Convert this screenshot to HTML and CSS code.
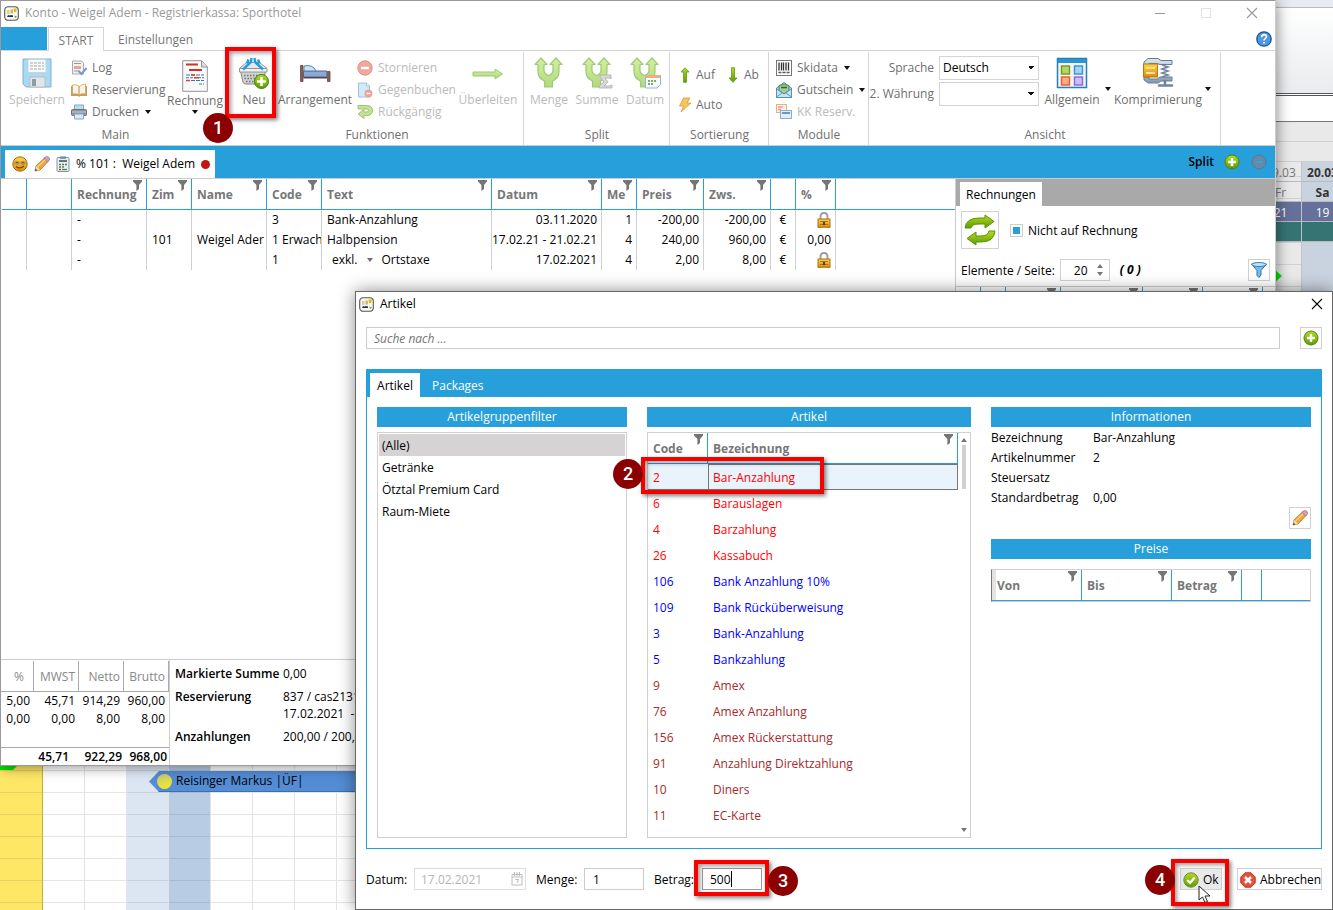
FILE: index.html
```html
<!DOCTYPE html>
<html lang="de">
<head>
<meta charset="utf-8">
<title>Konto - Weigel Adem - Registrierkassa: Sporthotel</title>
<link rel="stylesheet" href="styles.css">
</head>
<body>
<svg class="sprite" width="0" height="0" aria-hidden="true">
  <defs>
    <linearGradient id="gGreen" x1="0" y1="0" x2="0" y2="1"><stop offset="0" stop-color="#b4dc1e"/><stop offset="1" stop-color="#5e9c08"/></linearGradient>
    <linearGradient id="gPale" x1="0" y1="0" x2="0" y2="1"><stop offset="0" stop-color="#d6eda0"/><stop offset="1" stop-color="#b2d880"/></linearGradient>
    <linearGradient id="gGold" x1="0" y1="0" x2="0" y2="1"><stop offset="0" stop-color="#ffd54a"/><stop offset="1" stop-color="#dc8a10"/></linearGradient>
    <linearGradient id="gSteel" x1="0" y1="0" x2="0" y2="1"><stop offset="0" stop-color="#dde6f0"/><stop offset="1" stop-color="#8598ae"/></linearGradient>
  </defs>
  <symbol id="app" viewBox="0 0 15 15"><rect x=".7" y=".7" width="13.6" height="13.6" rx="3.5" fill="#faf8ee" stroke="#555" stroke-width="1.1"/><path d="M3 4h2.500v4H3z" fill="#e8cf80"/><path d="M6.500 3.500H9v4H6.500z" fill="#cdb978"/><path d="M9.500 2.500h3.500l-1 3.500h-2z" fill="#f0b400"/><path d="M3 11l1-2 1.500.5L7 9l2 .5V11z" fill="#173a63"/><path d="M10 9.500l3 1-1.500 1.500z" fill="#6b9b30"/></symbol>
  <symbol id="funnel" viewBox="0 0 9 11"><path d="M0 0h9v1.500L6 5v4l-2.600 2V5L0 1.500z" fill="#757575"/></symbol>
  <symbol id="down" viewBox="0 0 6 4"><path d="M0 0h6L3 4z" fill="#111"/></symbol>
  <symbol id="save" viewBox="0 0 30 32"><path d="M1 2h28v28H4l-3-3z" fill="#a9d9f3" stroke="#78b4d8"/><rect x="6" y="2.500" width="18" height="13" fill="#fafafa" stroke="#c3d6e2"/><path d="M8 6h14M8 9h14M8 12h14" stroke="#a8a8a8" stroke-dasharray="3 1"/><rect x="8" y="20" width="15" height="10" fill="#e5e5e5" stroke="#b4c0c8"/><rect x="10" y="22" width="4" height="7" fill="#8c9ca8"/></symbol>
  <symbol id="log" viewBox="0 0 16 16"><path d="M1.500 1h9l2 2v11h-11z" fill="#f2f2f2" stroke="#aaa"/><path d="M3 3.500h7M3 11h5" stroke="#999"/><path d="M3 6h7v3H3z" fill="#e2a98c"/><path d="M7.500 11l3 3 5-6" fill="none" stroke="#6f9cd0" stroke-width="2"/></symbol>
  <symbol id="book" viewBox="0 0 16 16"><path d="M0 4h16v10H9l-1 1-1-1H0z" fill="#cf9a55"/><path d="M1.500 3q4-1 6.500 1v9q-2-2-6.500-1zM14.500 2q-4 0-6.500 3v8q2-2 6.500-1z" fill="#fbf3df" stroke="#b99c6c" stroke-width=".7"/></symbol>
  <symbol id="print" viewBox="0 0 16 16"><path d="M3.500 1h9v5h-9z" fill="#b8dcf5" stroke="#86a6bf"/><rect x=".5" y="5.500" width="15" height="6" rx="1" fill="#8d949c" stroke="#6f757b"/><path d="M1 8h14" stroke="#c9ced3"/><path d="M3.500 10h9v5h-9z" fill="#d6e9f8" stroke="#86a6bf"/></symbol>
  <symbol id="bill" viewBox="0 0 26 32"><path d="M.7.700h19l5.600 6v24.600H.7z" fill="#fafafa" stroke="#8f9499"/><path d="M19.500 1v6h6" fill="#ddd" stroke="#8f9499"/><path d="M4 4.500h12M7 10h13" stroke="#d4311f" stroke-width="2"/><path d="M4 15h18M4 20.500h18" stroke="#3b73ba" stroke-width="1.200" stroke-dasharray="4 1"/><path d="M4 17.800h18M17 24h5" stroke="#3b73ba" stroke-width="1.100" stroke-dasharray="3 1"/><path d="M9 15h4M12 17.800h5M4 20.500h4" stroke="#e0422e" stroke-width="1.500"/></symbol>
  <symbol id="plus" viewBox="0 0 16 16"><circle cx="8" cy="8" r="7" fill="url(#gGreen)" stroke="#4c8410"/><path d="M8 4v8M4 8h8" stroke="#fff" stroke-width="2.400"/></symbol>
  <symbol id="basket" viewBox="0 0 32 32"><path d="M1.500 11.500l7-6h13l7.500 6z" fill="#e8e8e8" stroke="#999"/><path d="M2.500 14h25l-2.500 11q-.5 2-2.500 2h-15q-2 0-2.500-2z" fill="#d2d2d2" stroke="#868686"/><path d="M1.500 11.500h27.500v3.500H1.500z" fill="#f2f2f2" stroke="#8c8c8c" stroke-width=".9"/><path d="M6 18.500h19M6.500 21.500h18M8 24.500h15" stroke="#747474" stroke-width="1.300" stroke-dasharray="1.500 1.500"/><path d="M13.500 1L13 5 5 12.500M16.500 1l.5 4 8 7.500M10.500 2.500L9 6.500M20 2.500l1.500 4" stroke="#259be0" stroke-width="2.400" fill="none"/><circle cx="23.500" cy="24.500" r="7" fill="url(#gGreen)" stroke="#3f7c0b"/><path d="M23.500 20v9M19 24.500h9" stroke="#fff" stroke-width="2.600"/></symbol>
  <symbol id="bed" viewBox="0 0 32 32"><path d="M1.500 8.500h2.500v16H1.500zM28.500 14.500H31v10h-2.500z" fill="#8a604c" stroke="#68483b" stroke-width=".8"/><path d="M4.500 14h23.500v6H4.500z" fill="#8aa9d9" stroke="#4e6790"/><path d="M4.500 20h23.500v1.500H4.500z" fill="#5a4745"/><path d="M5 9q9-2 12 5H5z" fill="#c5e4f8" stroke="#5b82ad"/></symbol>
  <symbol id="stop" viewBox="0 0 16 16"><circle cx="8" cy="8" r="7.200" fill="#f2a79e" stroke="#e78a80"/><path d="M4 8h8" stroke="#fff" stroke-width="2.500"/></symbol>
  <symbol id="counter" viewBox="0 0 16 16"><path d="M1.500 1h8l3 3v11h-11z" fill="#d3e9f7" stroke="#9fc3dc"/><path d="M9.500 1v3h3" fill="#fff" stroke="#9fc3dc"/><circle cx="11.500" cy="11.500" r="3.900" fill="#f0a096"/><path d="M9.500 11.500h4" stroke="#fff" stroke-width="1.500"/></symbol>
  <symbol id="undo" viewBox="0 0 16 16"><path d="M1 1.500h8.500q6 0 6 5t-6 5H7v3L1 10l6-4.500v2.500h2.500q2 0 2-1.500t-2-1.500H1z" fill="#c5e09b" stroke="#9cc76a"/></symbol>
  <symbol id="transfer" viewBox="0 0 32 32"><path d="M1 15h22v-3l7.500 5-7.500 5v-3H1z" fill="url(#gPale)" stroke="#9cc973"/></symbol>
  <symbol id="split" viewBox="0 0 32 32"><path d="M8 1l6 6.500h-3V13q0 4 4.500 5.500Q20 17 20 13V7.500h-3L23 1l6 6.500h-3V15q0 6-6.500 9v6h-8v-6Q5 21 5 15V7.500H2z" fill="url(#gPale)" stroke="#9bcb73" stroke-width="1.200" stroke-linejoin="round"/></symbol>
  <symbol id="splitsum" viewBox="0 0 32 32"><use href="#split"/><path d="M19 18h11v4l-1-1h-5l3 4-4 4h6l2-1v3H18v-2l5-4-4-5z" fill="#d9d9d9" stroke="#aaa" stroke-width=".8"/></symbol>
  <symbol id="splitdate" viewBox="0 0 32 32"><use href="#split"/><path d="M16.500 18.500h15v9l-3.500 3.500H16.500z" fill="#f7fbff" stroke="#8eb7da"/><path d="M16.500 19.500h15" stroke="#efad83" stroke-width="3"/><path d="M19 24h9M19 27h6" stroke="#78b05b" stroke-width="2" stroke-dasharray="2 1"/></symbol>
  <symbol id="up" viewBox="0 0 12 16"><path d="M6 .7l4 4.300H7.500v10.300h-3V5H2z" fill="url(#gGreen)" stroke="#61981b" stroke-width=".8"/></symbol>
  <symbol id="dn" viewBox="0 0 12 16"><path d="M6 15.300L10 11H7.500V.7h-3V11H2z" fill="url(#gGreen)" stroke="#61981b" stroke-width=".8"/></symbol>
  <symbol id="flash" viewBox="0 0 12 16"><path d="M4.500 1H11L8 6h4L2 15l2.500-6H.5z" fill="#fac45d" stroke="#dc973e" stroke-width=".8"/></symbol>
  <symbol id="barcode" viewBox="0 0 16 16"><rect x=".5" y=".5" width="15" height="15" fill="#fff" stroke="#777"/><path d="M3 2.500v8M5.500 2.500v8M7.500 2.500v8M10 2.500v8M12.500 2.500v8" stroke="#333" stroke-width="1.300"/><path d="M2.500 12.500h11" stroke="#555" stroke-width="1.300" stroke-dasharray="3 1"/></symbol>
  <symbol id="voucher" viewBox="0 0 16 16"><path d="M.5 6L8 .5 15.500 6v9.500H.5z" fill="#a6d3ee" stroke="#4688b7"/><path d="M3 3.500q5-2 10 0v5L8 12 3 8.500z" fill="#a5c990" stroke="#4b7b49" stroke-width=".8"/><path d="M.5 7L8 12l7.500-5v8.500H.5z" fill="#c3e3f6" stroke="#4688b7" stroke-width=".8"/><path d="M.5 15L6 11M15.500 15L10 11" fill="none" stroke="#4688b7" stroke-width=".8"/><path d="M5 5.500h6" stroke="#38663a" stroke-width="1.500"/></symbol>
  <symbol id="cards" viewBox="0 0 16 16"><rect x=".5" y=".5" width="10" height="8" fill="#fff0df" stroke="#e3b184"/><path d="M2 3h5M2 5.500h3" stroke="#e99999" stroke-width="1.400"/><rect x="4.500" y="6.500" width="11" height="8" fill="#e0eefb" stroke="#87add0"/><path d="M6 9h8" stroke="#6e94c2" stroke-width="2"/></symbol>
  <symbol id="tiles" viewBox="0 0 32 32"><path d="M1.500 1.500h29v29h-29z" fill="#f4f4f4" stroke="#2380b8" stroke-width="1.500"/><path d="M2 2h28v4H2z" fill="#2c94d3"/><rect x="5.500" y="9" width="8" height="8" fill="#b9d46f" stroke="#789b17" stroke-width="1.400"/><rect x="18.500" y="9" width="8" height="8" fill="#9ed5fc" stroke="#3e8fcd" stroke-width="1.400"/><rect x="5.500" y="20" width="8" height="8" fill="#ffab85" stroke="#e0602e" stroke-width="1.400"/><rect x="18.500" y="20" width="8" height="8" fill="#cdbcfa" stroke="#8a67d5" stroke-width="1.400"/></symbol>
  <symbol id="clamp" viewBox="0 0 32 32"><path d="M2 5l4-3.500h10l3 2h11v4H18l-3-1H7v2H2zM2 20h5v2h8l3-2h12v4H19l-3 2H6l-4-3z" fill="url(#gSteel)" stroke="#677d95"/><path d="M20 8l6 2-6 2 6 2-6 2 6 2-6 2" fill="none" stroke="#71869d" stroke-width="1.600"/><path d="M23 24v4M17 28.500h13" stroke="#71869d" stroke-width="2.600" stroke-linecap="round"/><rect x="1.500" y="7" width="14" height="13" fill="url(#gGold)" stroke="#b07a16"/><path d="M4 11h9M4 16h9" stroke="#fbe18a" stroke-width="2"/></symbol>
  <symbol id="help" viewBox="0 0 16 16"><circle cx="8" cy="8" r="7.200" fill="#4d98df" stroke="#1a5298" stroke-width="1.300"/><path d="M5.700 6.200q0-2.500 2.400-2.500t2.300 2.100q0 1-1.200 1.800T8 9.400M8 10.900v1.700" fill="none" stroke="#fff" stroke-width="1.700"/></symbol>
  <symbol id="smile" viewBox="0 0 16 16"><circle cx="8" cy="8" r="7.200" fill="url(#gGold)" stroke="#a8690b"/><path d="M2.800 6h4v1.500q-2 1.500-4 0zM9 6h4v1.500q-2 1.500-4 0z" fill="#fff8dc" stroke="#7b5510" stroke-width=".7"/><path d="M5 6v1.500M11 6v1.500" stroke="#321" stroke-width="1.200"/><path d="M4 10.500q4 3 8-.5" fill="none" stroke="#7b4300" stroke-width="1.100"/></symbol>
  <symbol id="pencil" viewBox="0 0 16 16"><path d="M1 15l1-5L11 1.500 14.500 5 6 14z" fill="#f5a637" stroke="#a8681f" stroke-width=".8"/><path d="M3.500 11L12 3" stroke="#ffd282" stroke-width="1.300"/><path d="M10 2.500L12 .7q1.500-.7 3 .8t.4 2.700L13.500 6z" fill="#d69cc0" stroke="#98708c" stroke-width=".7"/><path d="M2 10l4 4-5 1z" fill="#f5dfb5"/><path d="M1 15l.5-2.500L3.500 14.500z" fill="#444"/></symbol>
  <symbol id="calc" viewBox="0 0 14 16"><rect x="1" y="1.500" width="12" height="14" rx="1" fill="#e8eff4" stroke="#7f96a5"/><rect x="4" y=".4" width="6" height="2.500" fill="#7891a2"/><path d="M3 5h8" stroke="#455" stroke-width="1.600"/><path d="M3 8.500h8M3 11h5" stroke="#578158" stroke-width="1.300" stroke-dasharray="2 1"/><path d="M3 13.500h2" stroke="#c83422" stroke-width="1.300"/><path d="M6 13.500h5" stroke="#38914a" stroke-width="1.300"/></symbol>
  <symbol id="lock" viewBox="0 0 14 16"><path d="M3.500 8V4.500Q3.500 1 7 1t3.500 3.500V8" fill="none" stroke="#9c9c9c" stroke-width="1.900"/><rect x="1" y="7" width="12" height="8.300" fill="url(#gGold)" stroke="#a86e0d"/><path d="M3 9.500h8M3 12.500h8" stroke="#a96f12"/><path d="M6 10h2v3H6z" fill="#5d3c08"/></symbol>
  <symbol id="minus" viewBox="0 0 16 16"><circle cx="8" cy="8" r="7" fill="#6589aa" stroke="#57799a"/><path d="M4.500 8h7" stroke="#3ba3dc" stroke-width="1.800"/></symbol>
  <symbol id="refresh" viewBox="0 0 32 32"><path d="M1 14Q2 4 15 4h6V1l9 6.500-9 6.500v-4h-6q-7 0-8 4z" fill="url(#gGreen)" stroke="#5c910a"/><path d="M31 17q-1 11-14 11h-5v3l-9-6.500L12 18v4h5q7 0 8-5z" fill="url(#gGreen)" stroke="#5c910a"/></symbol>
  <symbol id="bluefunnel" viewBox="0 0 16 16"><path d="M.5 2h15L10 8.500V13l-2 2.500-2-2V8.500z" fill="#79bbeb" stroke="#3170a5"/><ellipse cx="8" cy="2.500" rx="7.200" ry="2" fill="#bde0f7" stroke="#3b7db3"/></symbol>
  <symbol id="cal" viewBox="0 0 12 14"><path d="M1 2.500h10v10.500H1zM1 5h10M3.500 0v4M6 0v4M8.500 0v4" fill="none" stroke="#bdbdbd"/><path d="M4.500 7.500h3L6 11" fill="none" stroke="#bdbdbd"/></symbol>
  <symbol id="ok" viewBox="0 0 16 16"><circle cx="8" cy="8" r="7.200" fill="url(#gGreen)" stroke="#6b8a3c"/><path d="M4.200 8l2.800 2.800L11.800 5.500" fill="none" stroke="#fff" stroke-width="2.200"/></symbol>
  <symbol id="cancel" viewBox="0 0 16 16"><path d="M5 .8h6L15.200 5v6L11 15.200H5L.8 11V5z" fill="#e8503d" stroke="#ad3a2d"/><path d="M5 5l6 6M11 5l-6 6" stroke="#fff" stroke-width="2.500"/></symbol>
  <symbol id="x" viewBox="0 0 12 12"><path d="M1 1l10 10M11 1L1 11" fill="none" stroke="currentColor" stroke-width="1.100"/></symbol>
</svg>

<main class="desktop">
  <aside class="plan-side">
    <div class="side-top"></div>
    <div class="side-panel"></div>
    <div class="side-white"></div>
    <div class="side-gap"></div>
    <div class="side-gap"></div>
    <div class="side-days">
      <div class="side-day friday"><span>19.03</span><span>Fr</span><span class="free">21</span><span class="teal"></span></div>
      <div class="side-day saturday"><span>20.03</span><span>Sa</span><span class="free">19</span><span class="teal"></span></div>
    </div>
    <svg class="side-arrow" width="8" height="14"><path d="M0 0l8 7-8 7z" fill="#00e400"/></svg>
  </aside>
  <section class="plan-bottom">
    <div class="day today"></div><div class="day"></div><div class="day"></div><div class="day sat"></div><div class="day sun"></div><div class="day"></div><div class="day"></div><div class="day"></div><div class="day"></div><div class="day rest"></div>
    <svg class="plan-green" width="17" height="4"><path d="M0 0h17l-4 4H0z" fill="#00e400"/></svg>
    <div class="booking"><i class="dot"></i><span>Reisinger Markus |ÜF|</span></div>
  </section>

  <section class="window account">
    <header class="titlebar">
      <svg width="15" height="15"><use href="#app"/></svg>
      <span class="title">Konto - Weigel Adem - Registrierkassa: Sporthotel</span>
      <button class="winbtn" aria-label="Minimieren"><i class="min"></i></button>
      <button class="winbtn" aria-label="Maximieren"><i class="max"></i></button>
      <button class="winbtn" aria-label="Schließen"><svg width="12" height="12"><use href="#x"/></svg></button>
    </header>
    <nav class="ribbon-tabs">
      <button class="file" aria-label="Datei"></button>
      <button class="rtab active">START</button>
      <button class="rtab">Einstellungen</button>
      <button class="help" aria-label="Hilfe"><svg width="16" height="16"><use href="#help"/></svg></button>
    </nav>
    <div class="ribbon">
      <div class="group main-group">
        <div class="tools">
          <button class="big w54" disabled><svg width="30" height="32"><use href="#save"/></svg>Speichern</button>
          <div class="stack w96">
            <button class="small"><svg width="16" height="16"><use href="#log"/></svg>Log</button>
            <button class="small"><svg width="16" height="16"><use href="#book"/></svg>Reservierung</button>
            <button class="small"><svg width="16" height="16"><use href="#print"/></svg>Drucken<svg class="arrow" width="6" height="4"><use href="#down"/></svg></button>
          </div>
          <button class="big w56 low"><svg width="26" height="32"><use href="#bill"/></svg>Rechnung<svg width="6" height="4"><use href="#down"/></svg></button>
        </div>
        <div class="caption">Main</div>
      </div>
      <div class="group">
        <div class="tools">
          <button class="big w46"><svg width="32" height="32"><use href="#basket"/></svg>Neu</button>
          <button class="big w76"><svg width="32" height="32"><use href="#bed"/></svg>Arrangement</button>
          <div class="stack w100">
            <button class="small" disabled><svg width="16" height="16"><use href="#stop"/></svg>Stornieren</button>
            <button class="small" disabled><svg width="16" height="16"><use href="#counter"/></svg>Gegenbuchen</button>
            <button class="small" disabled><svg width="16" height="16"><use href="#undo"/></svg>Rückgängig</button>
          </div>
          <button class="big w56" disabled><svg width="32" height="32"><use href="#transfer"/></svg>Überleiten</button>
        </div>
        <div class="caption">Funktionen</div>
      </div>
      <div class="group">
        <div class="tools">
          <button class="big w48" disabled><svg width="32" height="32"><use href="#split"/></svg>Menge</button>
          <button class="big w48" disabled><svg width="32" height="32"><use href="#splitsum"/></svg>Summe</button>
          <button class="big w48" disabled><svg width="32" height="32"><use href="#splitdate"/></svg>Datum</button>
        </div>
        <div class="caption">Split</div>
      </div>
      <div class="group">
        <div class="sorts">
          <button class="small"><svg width="12" height="16"><use href="#up"/></svg>Auf</button>
          <button class="small"><svg width="12" height="16"><use href="#dn"/></svg>Ab</button>
          <button class="small"><svg width="12" height="16"><use href="#flash"/></svg>Auto</button>
        </div>
        <div class="caption">Sortierung</div>
      </div>
      <div class="group module-group">
        <div class="tools">
          <div class="stack">
            <button class="small"><svg width="16" height="16"><use href="#barcode"/></svg>Skidata<svg class="arrow" width="6" height="4"><use href="#down"/></svg></button>
            <button class="small"><svg width="16" height="16"><use href="#voucher"/></svg>Gutschein<svg class="arrow" width="6" height="4"><use href="#down"/></svg></button>
            <button class="small" disabled><svg width="16" height="16"><use href="#cards"/></svg>KK Reserv.</button>
          </div>
        </div>
        <div class="caption">Module</div>
      </div>
      <div class="group">
        <div class="tools">
          <div class="fields">
            <label for="lang">Sprache</label><select id="lang"><option>Deutsch</option></select>
            <label for="curr">2. Währung</label><select id="curr"><option></option></select>
          </div>
          <button class="big w66"><svg width="32" height="32"><use href="#tiles"/></svg>Allgemein</button>
          <svg class="mid" width="6" height="4"><use href="#down"/></svg>
          <button class="big w88"><svg width="32" height="32"><use href="#clamp"/></svg>Komprimierung</button>
          <svg class="mid" width="6" height="4"><use href="#down"/></svg>
        </div>
        <div class="caption">Ansicht</div>
      </div>
    </div>
    <div class="guestbar">
      <button class="guest">
        <svg width="16" height="16"><use href="#smile"/></svg>
        <svg width="16" height="16"><use href="#pencil"/></svg>
        <svg width="14" height="16"><use href="#calc"/></svg>
        <span>% 101 :&nbsp; Weigel Adem</span><i class="reddot"></i>
      </button>
      <span class="splitlabel">Split</span>
      <button class="icon" aria-label="Split hinzufügen"><svg width="16" height="16"><use href="#plus"/></svg></button>
      <button class="icon" aria-label="Split entfernen"><svg width="16" height="16"><use href="#minus"/></svg></button>
    </div>
    <div class="work">
      <div class="positions">
        <table class="grid">
          <colgroup><col class="c25"><col class="c45"><col class="c75"><col class="c45"><col class="c75"><col class="c55"><col class="c170"><col class="c110"><col class="c35"><col class="c67"><col class="c67"><col class="c25"><col class="c40"><col></colgroup>
          <thead><tr><th></th><th></th>
            <th>Rechnung<svg><use href="#funnel"/></svg></th><th>Zim<svg><use href="#funnel"/></svg></th><th>Name<svg><use href="#funnel"/></svg></th><th>Code<svg><use href="#funnel"/></svg></th><th>Text<svg><use href="#funnel"/></svg></th><th>Datum<svg><use href="#funnel"/></svg></th><th>Me<svg><use href="#funnel"/></svg></th><th>Preis<svg><use href="#funnel"/></svg></th><th>Zws.<svg><use href="#funnel"/></svg></th><th></th><th>%<svg><use href="#funnel"/></svg></th><th></th></tr></thead>
          <tbody>
            <tr><td></td><td></td><td>-</td><td></td><td></td><td>3</td><td>Bank-Anzahlung</td><td class="r">03.11.2020</td><td class="r">1</td><td class="r">-200,00</td><td class="r">-200,00</td><td class="m">€</td><td class="r"><svg width="14" height="16"><use href="#lock"/></svg></td><td></td></tr>
            <tr><td></td><td></td><td>-</td><td>101</td><td>Weigel Ader</td><td>1 Erwach</td><td>Halbpension</td><td class="r">17.02.21 - 21.02.21</td><td class="r">4</td><td class="r">240,00</td><td class="r">960,00</td><td class="m">€</td><td class="r">0,00</td><td></td></tr>
            <tr><td></td><td></td><td>-</td><td></td><td></td><td>1</td><td><span class="tax">exkl.<svg width="6" height="4"><use href="#down"/></svg>Ortstaxe</span></td><td class="r">17.02.2021</td><td class="r">4</td><td class="r">2,00</td><td class="r">8,00</td><td class="m">€</td><td class="r"><svg width="14" height="16"><use href="#lock"/></svg></td><td></td></tr>
          </tbody>
        </table>
      </div>
      <aside class="bills">
        <div class="billtabs"><button>Rechnungen</button></div>
        <div class="billrow">
          <button class="refresh" aria-label="Aktualisieren"><svg width="32" height="32"><use href="#refresh"/></svg></button>
          <input type="checkbox" id="nobill" checked><label for="nobill">Nicht auf Rechnung</label>
        </div>
        <div class="billrow second">
          <label for="per">Elemente / Seite:</label>
          <span class="spin"><input id="per" type="text" value="20"><svg width="6" height="12"><path d="M0 4h6L3 0zM0 8h6l-3 4z" fill="#777"/></svg></span>
          <b class="count">( 0 )</b>
          <button class="sq" aria-label="Filter"><svg width="16" height="16"><use href="#bluefunnel"/></svg></button>
        </div>
        <table class="grid billgrid">
          <colgroup><col class="c25"><col class="c25"><col class="c55"><col class="c82"><col class="c60"><col class="c60"><col></colgroup>
          <thead><tr><th></th><th></th><th><svg><use href="#funnel"/></svg></th><th><svg><use href="#funnel"/></svg></th><th><svg><use href="#funnel"/></svg></th><th><svg><use href="#funnel"/></svg></th><th></th></tr></thead>
        </table>
      </aside>
    </div>
    <footer class="totals">
      <table class="vat">
        <thead><tr><th>%</th><th>MWST</th><th>Netto</th><th>Brutto</th></tr></thead>
        <tbody><tr><td>5,00</td><td>45,71</td><td>914,29</td><td>960,00</td></tr><tr><td>0,00</td><td>0,00</td><td>8,00</td><td>8,00</td></tr></tbody>
        <tfoot><tr><td></td><td>45,71</td><td>922,29</td><td>968,00</td></tr></tfoot>
      </table>
      <dl class="summary">
        <dt>Markierte Summe</dt><dd>0,00</dd>
        <dt>Reservierung</dt><dd>837 / cas2131<br>17.02.2021 &nbsp;-</dd>
        <dt>Anzahlungen</dt><dd>200,00 / 200,00</dd>
      </dl>
    </footer>
    <div class="callout frame1"></div><div class="callout-no no1">1</div>
  </section>

  <section class="window dialog">
    <header class="titlebar dark">
      <svg width="15" height="15"><use href="#app"/></svg><span class="title">Artikel</span>
      <button class="winbtn" aria-label="Schließen"><svg width="12" height="12"><use href="#x"/></svg></button>
    </header>
    <div class="search"><input type="text" placeholder="Suche nach ..." aria-label="Suche"><button class="sq" aria-label="Neu"><svg width="16" height="16"><use href="#plus"/></svg></button></div>
    <div class="panel">
      <nav class="tabs"><button class="active">Artikel</button><button>Packages</button></nav>
      <div class="columns">
        <section class="col">
          <h2>Artikelgruppenfilter</h2>
          <ul class="list"><li class="sel">(Alle)</li><li>Getränke</li><li>Ötztal Premium Card</li><li>Raum-Miete</li></ul>
        </section>
        <section class="col">
          <h2>Artikel</h2>
          <div class="listbox">
            <table class="grid articles">
              <colgroup><col class="c60"><col></colgroup>
              <thead><tr><th>Code<svg><use href="#funnel"/></svg></th><th>Bezeichnung<svg><use href="#funnel"/></svg></th></tr></thead>
              <tbody>
                <tr class="red sel"><td>2</td><td>Bar-Anzahlung</td></tr>
                <tr class="red"><td>6</td><td>Barauslagen</td></tr>
                <tr class="red"><td>4</td><td>Barzahlung</td></tr>
                <tr class="red"><td>26</td><td>Kassabuch</td></tr>
                <tr class="blue"><td>106</td><td>Bank Anzahlung 10%</td></tr>
                <tr class="blue"><td>109</td><td>Bank Rücküberweisung</td></tr>
                <tr class="blue"><td>3</td><td>Bank-Anzahlung</td></tr>
                <tr class="blue"><td>5</td><td>Bankzahlung</td></tr>
                <tr class="brown"><td>9</td><td>Amex</td></tr>
                <tr class="brown"><td>76</td><td>Amex Anzahlung</td></tr>
                <tr class="brown"><td>156</td><td>Amex Rückerstattung</td></tr>
                <tr class="brown"><td>91</td><td>Anzahlung Direktzahlung</td></tr>
                <tr class="brown"><td>10</td><td>Diners</td></tr>
                <tr class="brown"><td>11</td><td>EC-Karte</td></tr>
              </tbody>
            </table>
            <div class="scroll"><svg width="6" height="4"><path d="M0 4h6L3 0z" fill="#777"/></svg><i></i><svg width="6" height="4"><path d="M0 0h6L3 4z" fill="#777"/></svg></div>
          </div>
        </section>
        <section class="col info">
          <h2>Informationen</h2>
          <dl><dt>Bezeichnung</dt><dd>Bar-Anzahlung</dd><dt>Artikelnummer</dt><dd>2</dd><dt>Steuersatz</dt><dd></dd><dt>Standardbetrag</dt><dd>0,00</dd></dl>
          <button class="sq edit" aria-label="Bearbeiten"><svg width="16" height="16"><use href="#pencil"/></svg></button>
          <h2>Preise</h2>
          <table class="grid prices">
            <colgroup><col class="c90"><col class="c90"><col class="c70"><col class="c20"><col></colgroup>
            <thead><tr><th>Von<svg><use href="#funnel"/></svg></th><th>Bis<svg><use href="#funnel"/></svg></th><th>Betrag<svg><use href="#funnel"/></svg></th><th></th><th></th></tr></thead>
          </table>
        </section>
      </div>
    </div>
    <footer class="actions">
      <label for="date">Datum:</label><span class="date"><input id="date" type="text" value="17.02.2021" disabled><svg width="12" height="14"><use href="#cal"/></svg></span>
      <label for="qty">Menge:</label><input id="qty" type="text" value="1">
      <label for="amount">Betrag:</label><input id="amount" class="focus" type="text" value="500">
      <button class="act okbtn"><svg width="16" height="16"><use href="#ok"/></svg>Ok</button>
      <button class="act"><svg width="16" height="16"><use href="#cancel"/></svg>Abbrechen</button>
    </footer>
    <i class="caret"></i>
    <div class="callout frame2"></div><div class="callout-no no2">2</div>
    <div class="callout frame3"></div><div class="callout-no no3">3</div>
    <svg class="cursor" width="13" height="18" viewBox="0 0 13 18"><path d="M1 1v14l3.500-3 2.500 5.500 2.500-1L7 11h5z" fill="#fff" stroke="#222"/></svg>
    <div class="callout frame4"></div><div class="callout-no no4">4</div>
  </section>
</main>
</body>
</html>
```
FILE: styles.css
```css
* { box-sizing: border-box; }
body { margin: 0; font: 12px/16px "Open Sans", "Noto Sans", sans-serif; color: #000; }
button, input, select { font: inherit; color: inherit; margin: 0; padding: 0; border: 0; background: none; border-radius: 0; }
button, label, span { white-space: nowrap; }
svg { display: block; flex: none; }
.sprite { position: absolute; }

/* desktop and room plan behind the windows */
.desktop { position: relative; height: 100vh; overflow: hidden; background: #fff; display: grid; grid-template-columns: 1fr 73px; grid-template-rows: 1fr 144px; }
.plan-side { grid-column: 2; position: relative; display: flex; flex-direction: column; background: #e9e9e9; }
.side-top { height: 8px; background: #e9eaef; border-bottom: 1px solid #b9bbc0; }
.side-panel { height: 88px; background: linear-gradient(#fff, #e9ebee); border-bottom: 3px double #555; }
.side-white { height: 26px; background: #fff; border-bottom: 1px solid #777; }
.side-gap { height: 20px; border-bottom: 1px solid #cfcfcf; }
.side-days { flex: 1; display: flex; }
.side-day { flex: none; width: 42px; display: flex; flex-direction: column; text-align: center; font-size: 12px; color: #777; border-right: 1px solid #bfc5cc; background: linear-gradient(#cdd1d6 1px, transparent 1px) 0 14px / 100% 22px; }
.side-day.saturday { font-weight: bold; color: #333; background-color: #c9d3e0; }
.side-day span { height: 20px; line-height: 21px; border-bottom: 1px solid #b5bac0; }
.side-day .free { background: #65719a; color: #fff; font-weight: normal; }
.side-day .teal { background: #367473; }
.side-arrow { position: absolute; left: 14px; top: 269px; }
.plan-bottom { grid-column: 1 / 3; position: relative; display: flex; }
.day { width: 42px; border-right: 1px solid #e4e4e4; background: linear-gradient(rgba(90, 90, 90, .16) 1px, transparent 1px) 0 4px / 100% 22px; }
.day.today { width: 43px; background-color: #ffe766; border-right-color: #c9ad33; }
.day.sat { background-color: #dce6f2; }
.day.sun { background-color: #b8cce4; }
.day.rest { flex: 1; }
.plan-green { position: absolute; left: 0; top: 0; }
.booking { position: absolute; left: 149px; top: 5px; width: 260px; height: 21px; padding-left: 8px; display: flex; align-items: center; gap: 4px; background: #538dd5; border-bottom: 1px solid #3c6dac; clip-path: polygon(0 50%, 10px 0, 100% 0, 100% 100%, 10px 100%); }
.dot { width: 15px; height: 15px; border-radius: 50%; background: linear-gradient(160deg, #c7c785, #f7ee18); }

/* window frames */
.window { position: absolute; background: #fff; display: flex; flex-direction: column; }
.account { left: 0; right: 57px; top: 0; bottom: 144px; border: 1px solid #999; border-right-color: #ccc; box-shadow: 2px 2px 12px rgba(0, 0, 0, .4); }
.dialog { left: 355px; right: 0; top: 291px; bottom: 0; border: 1px solid #666; box-shadow: 0 0 16px rgba(0, 0, 0, .45); }
.titlebar { height: 26px; flex: none; display: flex; align-items: center; padding: 0 0 2px 3px; color: #999; }
.titlebar.dark { color: #000; height: 25px; padding-top: 1px; }
.title { flex: 1; margin-left: 6px; }
.winbtn { width: 46px; height: 24px; display: grid; place-items: center; }
.dark .winbtn { width: 31px; }
.min { width: 10px; height: 1px; background: #999; }
.max { width: 10px; height: 10px; border: 1px solid #e2e2e2; }

/* ribbon */
.ribbon-tabs { height: 24px; flex: none; display: flex; align-items: stretch; border-bottom: 1px solid #d4d4d4; color: #777; }
.file { width: 46px; margin-right: 1px; background: #269fdb; }
.rtab { padding: 3px 14px 0; }
.rtab.active { width: 56px; padding: 3px 0 0; border: 1px solid #d4d4d4; border-bottom: 0; margin-bottom: -1px; background: #fff; }
.help { margin: 2px 3px 2px auto; }
.ribbon { height: 95px; flex: none; display: grid; grid-template-columns: 229px 294px 146px 99px 100px 352px; border-bottom: 1px solid #ccc; color: #6f6f6f; }
.group { display: flex; flex-direction: column; padding: 5px 0 0 1px; margin: 1px 0; border-right: 1px solid #d4d4d4; min-width: 0; }
.main-group { padding-left: 9px; border-right-color: transparent; }
.module-group { padding-left: 7px; }
.tools { display: flex; height: 68px; }
.caption { text-align: center; height: 20px; line-height: 20px; }
.main-group .caption { margin-left: -8px; }
.module-group .caption { margin-left: -6px; }
.big { display: flex; flex-direction: column; align-items: center; line-height: 22px; }
.big.low { padding-top: 3px; line-height: 18px; }
.big:disabled, .small:disabled { color: #bababa; }
.w46 { width: 46px; } .w48 { width: 48px; } .w54 { width: 54px; } .w56 { width: 62px; } .w66 { width: 66px; }
.w76 { width: 76px; } .w88 { width: 94px; } .w96 { width: 96px; margin-left: 7px; } .w100 { width: 100px; margin-left: 4px; }
.main-group .w56 { width: 56px; }
.stack { display: flex; flex-direction: column; }
.small { height: 22px; display: flex; align-items: center; gap: 5px; }
.arrow { margin-left: 1px; }
.sorts { height: 68px; padding: 3px 0 0 8px; display: grid; grid-template-columns: 48px 42px; grid-auto-rows: 30px; align-items: center; }
.fields { display: grid; grid-template-columns: 65px 100px; grid-auto-rows: 24px; gap: 2px 5px; align-items: center; text-align: right; margin: -1px 0 0 -1px; align-content: start; }
.fields label { justify-self: end; }
.fields select { appearance: none; height: 24px; padding: 0 3px; border: 1px solid #d4d4d4; color: #000; background: conic-gradient(from -45deg at 50% 100%, #111 90deg, transparent 0) 88px 9px / 6px 3px no-repeat; }
.mid { margin-top: 30px; }

/* guest bar */
.guestbar { height: 32px; flex: none; display: flex; align-items: center; background: #269fdb; padding-right: 8px; }
.guest { align-self: flex-end; height: 28px; margin: 0 auto 0 4px; width: 210px; display: flex; align-items: center; gap: 6px; padding-left: 7px; background: #fff; }
.reddot { width: 9px; height: 9px; border-radius: 50%; background: #c41414; }
.splitlabel { margin-right: 10px; font-weight: 600; }
.icon + .icon { margin-left: 11px; }

/* data grids */
.work { flex: 1; min-height: 0; display: flex; border-top: 1px solid #ccc; }
.positions { flex: 1; min-width: 0; padding-left: 1px; }
.grid { width: 100%; table-layout: fixed; border-collapse: separate; border-spacing: 0; }
.grid th { position: relative; height: 31px; padding: 2px 0 0 5px; text-align: left; color: #777; font-weight: bold; border-right: 1px solid #269fdb; border-bottom: 1px solid #269fdb; white-space: nowrap; }
.grid th svg { position: absolute; right: 4px; top: 1px; width: 9px; height: 11px; }
.grid th:last-child { border-right: 0; }
.grid td { height: 20px; padding: 0 0 0 5px; border-right: 1px solid #d0d0d0; overflow: hidden; white-space: nowrap; text-overflow: clip; }
.grid td:last-child { border-right: 0; }
.grid td.r { text-align: right; padding: 0 4px 0 0; }
.grid td.m { text-align: center; padding: 0; }
.positions .r svg { margin-left: auto; }
.tax { display: flex; align-items: center; padding-left: 5px; gap: 9px; }
.tax svg { opacity: .6; }
.c20 { width: 20px; } .c25 { width: 25px; } .c35 { width: 35px; } .c40 { width: 40px; } .c45 { width: 45px; } .c55 { width: 55px; } .c60 { width: 60px; }
.c67 { width: 67px; } .c70 { width: 70px; } .c75 { width: 75px; } .c82 { width: 82px; } .c90 { width: 90px; } .c110 { width: 110px; } .c170 { width: 170px; }

/* bills side panel */
.bills { width: 320px; border-left: 1px solid #ccc; }
.billtabs { height: 27px; padding: 3px 0 0 4px; background: #a9a9a9; }
.billtabs button { width: 82px; height: 24px; padding-top: 1px; background: #fff; }
.billrow { display: flex; align-items: center; padding: 5px 5px 0 5px; }
.billrow.second { padding-top: 10px; padding-bottom: 5px; }
.billrow label { padding-top: 1px; }
.refresh { width: 38px; height: 38px; border: 1px solid #d0d0d0; display: grid; place-items: center; margin-right: 11px; }
.bills input[type=checkbox] { appearance: none; width: 13px; height: 13px; border: 1px solid #ccc; background: #269fdb; box-shadow: inset 0 0 0 2px #fff; margin-right: 5px; }
.spin { width: 50px; height: 22px; margin: 0 10px 0 5px; border: 1px solid #d0d0d0; display: flex; align-items: center; }
.spin input { width: 36px; height: 20px; padding-left: 13px; }
.count { font-style: italic; margin-right: auto; }
.sq { width: 22px; height: 22px; flex: none; border: 1px solid #d0d0d0; display: grid; place-items: center; background: #fff; }
.billgrid { border-top: 1px solid #ccc; }

/* totals */
.totals { height: 106px; flex: none; display: flex; border-top: 1px solid #ccc; }
.vat { width: 168px; table-layout: fixed; border-spacing: 0; margin-top: 1px; text-align: right; }
.vat th { height: 31px; padding: 2px 3px 0 0; border-right: 1px solid #aaa; border-bottom: 1px solid #aaa; color: #888; font-weight: normal; }
.vat th:first-child { width: 33px; padding-right: 9px; }
.vat td { height: 18px; padding: 0 4px 0 0; }
.vat tbody tr:last-child td { height: 37px; vertical-align: top; padding-top: 1px; }
.vat tfoot td { border-top: 1px solid #aaa; font-weight: 600; padding-right: 2px; }
.vat tfoot td:nth-child(2) { padding-right: 10px; }
.summary { flex: 1; margin: 0; padding: 5px; border-left: 1px solid #ccc; display: grid; grid-template-columns: 108px 1fr; align-content: start; row-gap: 6px; line-height: 17px; }
.summary dt { font-weight: 600; white-space: nowrap; }
dd { margin: 0; }

/* article dialog */
.search { display: flex; gap: 20px; padding: 10px 10px 20px; }
.search input { flex: 1; height: 22px; border: 1px solid #ccc; padding: 1px 7px 0; font-style: italic; }
.search input::placeholder { color: #777; opacity: 1; }
.panel { flex: 1; min-height: 0; margin: 0 10px; border: 1px solid #269fdb; display: flex; flex-direction: column; }
.tabs { height: 27px; flex: none; padding: 3px 0 0 3px; background: #269fdb; color: #fff; display: flex; }
.tabs button { padding: 2px 12px 0; height: 24px; }
.tabs .active { width: 50px; padding: 2px 0 0; background: #fff; color: #000; }
.columns { flex: 1; min-height: 0; display: grid; grid-template-columns: 250fr 324fr 320fr; gap: 20px; padding: 10px; }
.col { display: flex; flex-direction: column; min-height: 0; min-width: 0; }
h2 { margin: 0; flex: none; height: 20px; font: inherit; line-height: 20px; text-align: center; color: #fff; background: #269fdb; }
.list, .listbox { flex: 1; min-height: 0; margin: 5px 0 0; border: 1px solid #d0d0d0; }
.list { padding: 1px; list-style: none; line-height: 20px; }
.list li { padding: 2px 3px 0; }
.list .sel { background: #d5d3d4; }
.listbox { display: flex; overflow: hidden; }
.articles { flex: 1; align-self: flex-start; }
.articles td, .articles tr > *:last-child { border-right: 0; }
.articles th:last-child { border-right: 1px solid #269fdb; }
.articles td { height: 26px; padding-top: 2px; }
.red { color: #f00; } .blue { color: #00f; } .brown { color: #a52a2a; }
.articles .sel td { background: #e8f3fb; border-bottom: 1px solid #777; }
.articles .sel td:last-child { border: 1px solid #777; padding-left: 4px; }
.scroll { width: 12px; display: flex; flex-direction: column; align-items: center; padding: 5px 0; }
.scroll i { width: 4px; height: 44px; margin: 3px 0 auto; background: #d0d0d0; }
.info dl { margin: 1px 0 0; display: grid; grid-template-columns: 102px 1fr; grid-auto-rows: 20px; line-height: 20px; }
.edit { align-self: flex-end; margin-bottom: 10px; }
.info .edit { margin-top: -1px; }
.prices { margin-top: 10px; border: 1px solid #d0d0d0; border-left: 1px solid #777; }
.prices th:first-child { box-shadow: inset 4px 0 #e3e3e3; }
.actions { flex: none; height: 60px; display: flex; align-items: center; padding: 0 10px; }
.actions label { width: 48px; padding-top: 1px; }
.actions input { width: 60px; height: 22px; border: 1px solid #ccc; padding: 1px 8px 0; margin-right: 10px; }
.actions .focus { border-color: #999; padding-left: 7px; margin-right: auto; }
.date { width: 112px; height: 22px; margin-right: 10px; border: 1px solid #ddd; display: flex; align-items: center; }
.date input { width: 96px; height: 20px; margin: 0; border: 0; padding: 1px 6px 0; color: #b5b5b5; }
.act { height: 22px; border: 1px solid #d0d0d0; padding: 1px 0 0 2px; display: flex; align-items: center; gap: 4px; }
.okbtn { width: 42px; background: #e9e9e9; margin-right: 15px; }
.act:last-child { width: 85px; }
.caret { position: absolute; left: 375px; bottom: 22px; width: 1px; height: 16px; background: #000; }

/* numbered hints over the windows */
.callout { position: absolute; border: 4px solid #f90000; box-shadow: 2px 2px 4px rgba(0, 0, 0, .5), inset 2px 2px 4px rgba(0, 0, 0, .4); }
.callout-no { position: absolute; width: 30px; height: 30px; border-radius: 50%; background: #8b0000; color: #fff; font: 500 18px/30px Roboto, sans-serif; text-align: center; }
.frame1 { left: 224px; top: 46px; width: 51px; height: 71px; }
.no1 { left: 202px; top: 112px; }
.frame2 { left: 285px; top: 165px; width: 183px; height: 37px; }
.no2 { left: 257px; top: 167px; }
.frame3 { left: 338px; bottom: 13px; width: 75px; height: 36px; }
.no3 { left: 412px; bottom: 13px; }
.frame4 { right: 103px; bottom: 3px; width: 58px; height: 47px; }
.no4 { right: 157px; bottom: 14px; }
.cursor { position: absolute; right: 121px; bottom: 6px; }
```
